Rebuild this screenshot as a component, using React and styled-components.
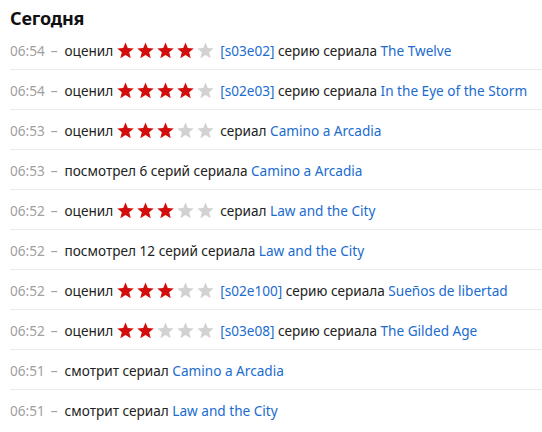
import React from "react";
import styled, { createGlobalStyle } from "styled-components";

const Global = createGlobalStyle`
  html, body { margin: 0; padding: 0; background: #fff; }
  body { font-family: "Noto Sans", "Open Sans", sans-serif; color: #222; }
`;

const Page = styled.div`
  padding: 7px 0 0 10px;
`;

const Heading = styled.h2`
  margin: 0;
  font-size: 18px;
  font-weight: 700;
  line-height: 23px;
  color: #111;
  letter-spacing: -0.2px;
`;

const List = styled.ul`
  list-style: none;
  margin: 0;
  padding: 0;
`;

const Row = styled.li`
  height: 40px;
  display: flex;
  align-items: center;
  font-size: 13.6px;
  white-space: nowrap;
  border-bottom: ${(p) => (p.$last ? "none" : "1px solid #ebebeb")};
  box-sizing: border-box;
  padding-top: 1px;
`;

const Time = styled.span`
  color: #a0a0a0;
  margin-right: 6px;
`;

const Dash = styled.span`
  color: #a0a0a0;
  margin-right: 7px;
`;

const Text = styled.span`
  color: #222;
`;

const Link = styled.a`
  color: #1a6ccf;
  text-decoration: none;
`;

const Stars = styled.span`
  display: inline-flex;
  gap: 3px;
  margin: 0 6px 0 4px;
`;

const StarSvg = styled.svg`
  width: 17px;
  height: 17px;
  display: block;
`;

function Star({ on }) {
  return (
    <StarSvg viewBox="0 0 24 24">
      <path
        d="M12 0.8l3.2 7.7 8.5.6-6.5 5.5 2.1 8.4L12 18.5l-7.3 4.5 2.1-8.4L.3 9.1l8.5-.6z"
        fill={on ? "#d30c0c" : "#d2d2d2"}
      />
    </StarSvg>
  );
}

function Rating({ n }) {
  return (
    <Stars>
      {[0, 1, 2, 3, 4].map((i) => (
        <Star key={i} on={i < n} />
      ))}
    </Stars>
  );
}

const rows = [
  { t: "06:54", type: "rate", n: 4, ep: "[s03e02]", show: "The Twelve" },
  { t: "06:54", type: "rate", n: 4, ep: "[s02e03]", show: "In the Eye of the Storm" },
  { t: "06:53", type: "rate", n: 3, show: "Camino a Arcadia" },
  { t: "06:53", type: "watched", count: "6", show: "Camino a Arcadia" },
  { t: "06:52", type: "rate", n: 3, show: "Law and the City" },
  { t: "06:52", type: "watched", count: "12", show: "Law and the City" },
  { t: "06:52", type: "rate", n: 3, ep: "[s02e100]", show: "Sueños de libertad" },
  { t: "06:52", type: "rate", n: 2, ep: "[s03e08]", show: "The Gilded Age" },
  { t: "06:51", type: "watching", show: "Camino a Arcadia" },
  { t: "06:51", type: "watching", show: "Law and the City" },
];

export default function App() {
  return (
    <>
      <Global />
      <Page>
        <Heading>Сегодня</Heading>
        <List>
          {rows.map((r, i) => (
            <Row key={i} $last={i === rows.length - 1}>
              <Time>{r.t}</Time>
              <Dash>–</Dash>
              {r.type === "rate" && (
                <>
                  <Text>оценил</Text>
                  <Rating n={r.n} />
                  {r.ep ? (
                    <>
                      <Link href="#">{r.ep}</Link>
                      <Text>&nbsp;серию сериала&nbsp;</Text>
                    </>
                  ) : (
                    <Text>сериал&nbsp;</Text>
                  )}
                  <Link href="#">{r.show}</Link>
                </>
              )}
              {r.type === "watched" && (
                <>
                  <Text>посмотрел {r.count} серий сериала&nbsp;</Text>
                  <Link href="#">{r.show}</Link>
                </>
              )}
              {r.type === "watching" && (
                <>
                  <Text>смотрит сериал&nbsp;</Text>
                  <Link href="#">{r.show}</Link>
                </>
              )}
            </Row>
          ))}
        </List>
      </Page>
    </>
  );
}
